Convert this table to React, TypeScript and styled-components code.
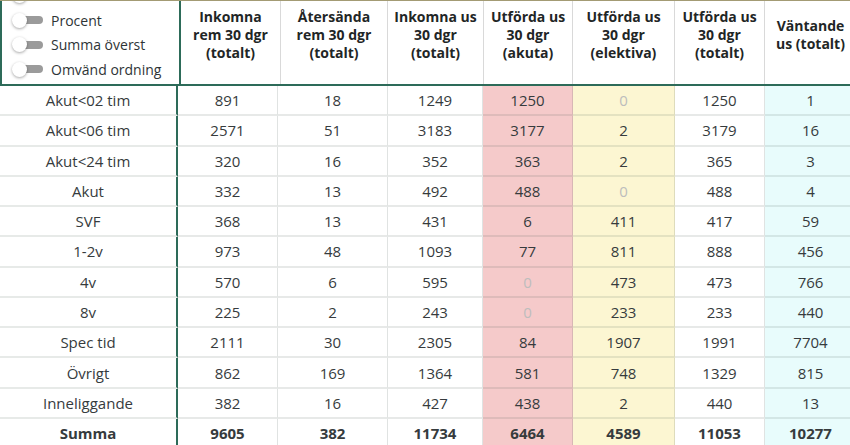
import React from "react";
import styled, { createGlobalStyle } from "styled-components";

const GlobalStyle = createGlobalStyle`
  html, body { margin: 0; padding: 0; background: #ffffff; overflow: hidden; }
  body { font-family: "Open Sans", "Noto Sans", "DejaVu Sans", sans-serif; }
`;

const GREEN = "#2d6b59";

const Page = styled.div`
  width: 857px;
  background: #fff;
`;

const HeaderRow = styled.div`
  display: grid;
  grid-template-columns: 181px 100px 107px 96px 89px 102px 90px 92px;
  height: 86px;
  box-sizing: border-box;
  border-top: 1px solid #a39b74;
  border-bottom: 2px solid ${GREEN};
`;

const ToggleCell = styled.div`
  border-left: 2px solid ${GREEN};
  border-right: 2px solid ${GREEN};
  overflow: hidden;
  padding-left: 10px;
`;

const ToggleList = styled.div`
  display: flex;
  flex-direction: column;
  margin-top: -17.75px;
`;

const ToggleRow = styled.div`
  height: 24.5px;
  display: flex;
  align-items: center;
  gap: 8px;
  font-size: 14px;
  color: #2e3436;
`;

const Switch = styled.span`
  position: relative;
  width: 31px;
  height: 15px;
  flex: none;
`;

const Track = styled.span`
  position: absolute;
  left: 2px;
  top: 3.5px;
  width: 29px;
  height: 8px;
  border-radius: 4px;
  background: #9b9b9b;
`;

const Knob = styled.span`
  position: absolute;
  left: 0;
  top: 0;
  width: 15px;
  height: 15px;
  border-radius: 50%;
  background: #fff;
  box-shadow: 0 1px 3px rgba(0, 0, 0, 0.35);
`;

const HeadCell = styled.div`
  display: flex;
  align-items: center;
  justify-content: center;
  text-align: center;
  padding: 0 4px 16px;
  border-right: 1px solid #d9d9d9;
  font-weight: 700;
  font-size: 14px;
  line-height: 18px;
  color: #1f2626;
`;

const Body = styled.div`
  display: flex;
  flex-direction: column;
`;

const Row = styled.div<{ $total?: boolean }>`
  display: grid;
  grid-template-columns: 178px 100px 110px 95px 90px 102px 90px 92px;
  height: 30.27px;
  font-weight: ${(p) => (p.$total ? 700 : 400)};
`;

type Tone = "plain" | "pink" | "yellow" | "cyan";

const toneBg: Record<Tone, string> = {
  plain: "#ffffff",
  pink: "#f5caca",
  yellow: "#fcf6d2",
  cyan: "#e8fcfc",
};

const Cell = styled.div<{ $tone: Tone; $muted?: boolean; $label?: boolean }>`
  display: flex;
  align-items: center;
  justify-content: center;
  box-sizing: border-box;
  background: ${(p) => toneBg[p.$tone]};
  border-bottom: 2px solid rgba(70, 90, 80, 0.13);
  border-right: ${(p) =>
    p.$label ? `2px solid ${GREEN}` : "1px solid rgba(70, 90, 80, 0.16)"};
  font-size: 15px;
  color: ${(p) => (p.$muted ? "#bdbdbd" : "#363b3d")};
`;

const headers = [
  ["Inkomna", "rem 30 dgr", "(totalt)"],
  ["Återsända", "rem 30 dgr", "(totalt)"],
  ["Inkomna us", "30 dgr", "(totalt)"],
  ["Utförda us", "30 dgr", "(akuta)"],
  ["Utförda us", "30 dgr", "(elektiva)"],
  ["Utförda us", "30 dgr", "(totalt)"],
  ["Väntande", "us (totalt)"],
];

const tones: Tone[] = ["plain", "plain", "plain", "pink", "yellow", "plain", "cyan"];

const rows: [string, ...number[]][] = [
  ["Akut<02 tim", 891, 18, 1249, 1250, 0, 1250, 1],
  ["Akut<06 tim", 2571, 51, 3183, 3177, 2, 3179, 16],
  ["Akut<24 tim", 320, 16, 352, 363, 2, 365, 3],
  ["Akut", 332, 13, 492, 488, 0, 488, 4],
  ["SVF", 368, 13, 431, 6, 411, 417, 59],
  ["1-2v", 973, 48, 1093, 77, 811, 888, 456],
  ["4v", 570, 6, 595, 0, 473, 473, 766],
  ["8v", 225, 2, 243, 0, 233, 233, 440],
  ["Spec tid", 2111, 30, 2305, 84, 1907, 1991, 7704],
  ["Övrigt", 862, 169, 1364, 581, 748, 1329, 815],
  ["Inneliggande", 382, 16, 427, 438, 2, 440, 13],
];

const total: [string, ...number[]] = ["Summa", 9605, 382, 11734, 6464, 4589, 11053, 10277];

const toggles = ["", "Procent", "Summa överst", "Omvänd ordning"];

function DataRow({ data, isTotal }: { data: [string, ...number[]]; isTotal?: boolean }) {
  const [label, ...values] = data;
  return (
    <Row $total={isTotal}>
      <Cell $tone="plain" $label>
        {label}
      </Cell>
      {values.map((v, i) => (
        <Cell key={i} $tone={tones[i]} $muted={v === 0}>
          {v}
        </Cell>
      ))}
    </Row>
  );
}

export default function App() {
  return (
    <Page>
      <GlobalStyle />
      <HeaderRow>
        <ToggleCell>
          <ToggleList>
            {toggles.map((t, i) => (
              <ToggleRow key={i}>
                <Switch>
                  <Track />
                  <Knob />
                </Switch>
                {t && <span>{t}</span>}
              </ToggleRow>
            ))}
          </ToggleList>
        </ToggleCell>
        {headers.map((lines, i) => (
          <HeadCell key={i}>
            <div>
              {lines.map((l, j) => (
                <div key={j}>{l}</div>
              ))}
            </div>
          </HeadCell>
        ))}
      </HeaderRow>
      <Body>
        {rows.map((r, i) => (
          <DataRow key={i} data={r} />
        ))}
        <DataRow data={total} isTotal />
      </Body>
    </Page>
  );
}
